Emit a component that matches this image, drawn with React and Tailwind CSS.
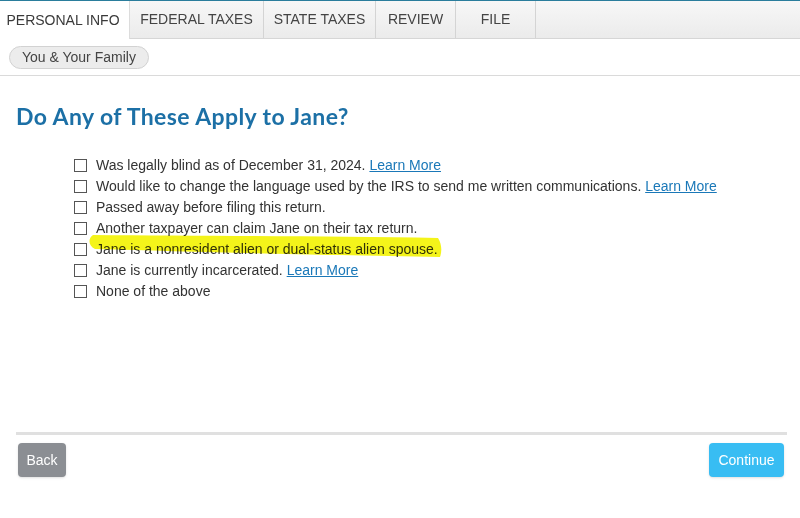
import React from "react";

const tabs = [
  { label: "PERSONAL INFO", w: "w-[130px]", active: true },
  { label: "FEDERAL TAXES", w: "w-[134px]" },
  { label: "STATE TAXES", w: "w-[112px]" },
  { label: "REVIEW", w: "w-[80px]" },
  { label: "FILE", w: "w-[80px]" },
];

const options = [
  { text: "Was legally blind as of December 31, 2024.", link: true },
  {
    text: "Would like to change the language used by the IRS to send me written communications.",
    link: true,
  },
  { text: "Passed away before filing this return." },
  { text: "Another taxpayer can claim Jane on their tax return." },
  { text: "Jane is a nonresident alien or dual-status alien spouse." },
  { text: "Jane is currently incarcerated.", link: true },
  { text: "None of the above" },
];

function Tabs() {
  return (
    <div className="flex h-[39px] border-t border-[#2a7d9c] bg-gradient-to-b from-[#f7f7f7] to-[#ebebeb] border-b border-b-[#d6d6d6]">
      {tabs.map((t) => (
        <div
          key={t.label}
          className={
            t.active
              ? `${t.w} flex items-center justify-center pr-[3px] bg-white text-[14px] text-[#3a3a3a] -mb-px border-r border-[#dcdcdc]`
              : `${t.w} flex items-center justify-center text-[14px] text-[#444] border-r border-[#d4d4d4]`
          }
        >
          {t.label}
        </div>
      ))}
    </div>
  );
}

export default function App() {
  return (
    <div className="relative w-[800px] h-[518px] bg-white font-['Liberation_Sans',Arial,sans-serif] overflow-hidden">
      <Tabs />

      {/* breadcrumb */}
      <div className="h-[37px] border-b border-[#dadada] flex items-center pl-[9px]">
        <span className="h-[23px] px-[12px] flex items-center rounded-full bg-[#ececec] border border-[#d2d2d2] text-[14px] text-[#444]">
          You &amp; Your Family
        </span>
      </div>

      <h1 className="mt-[26px] ml-[16px] font-['Lato',sans-serif] font-bold text-[23px] tracking-[0.4px] leading-[28px] text-[#1c70a6]">
        Do Any of These Apply to Jane?
      </h1>

      <ul className="mt-[25px] ml-[74px] flex flex-col">
        {options.map((o) => (
          <li key={o.text} className="h-[21px] flex items-center gap-[9px]">
            <span className="w-[13px] h-[13px] border border-[#555] bg-white shrink-0" />
            <span className="text-[14px] text-[#333]">
              {o.text}
              {o.link && (
                <>
                  {" "}
                  <a className="text-[#1a78b8] underline cursor-pointer">Learn More</a>
                </>
              )}
            </span>
          </li>
        ))}
      </ul>

      {/* highlighter mark */}
      <svg
        className="absolute left-0 top-0 pointer-events-none mix-blend-multiply"
        width="800"
        height="518"
      >
        <path
          d="M93 235 C200 236 330 236 438 238 C442 244 442 252 440 257 C320 255 200 252 95 249 C88 246 88 238 93 235 Z"
          fill="#f4f41a"
        />
      </svg>

      <div className="absolute left-[16px] right-[13px] top-[432px] h-[3px] bg-[#e0e0e0]" />

      <div className="absolute left-[18px] right-[16px] top-[443px] flex justify-between">
        <button className="h-[34px] w-[48px] rounded-[4px] bg-[#8b8e93] text-white text-[14px] shadow-sm">
          Back
        </button>
        <button className="h-[34px] w-[75px] rounded-[4px] bg-[#38bdf3] text-white text-[14px] shadow-sm">
          Continue
        </button>
      </div>
    </div>
  );
}
